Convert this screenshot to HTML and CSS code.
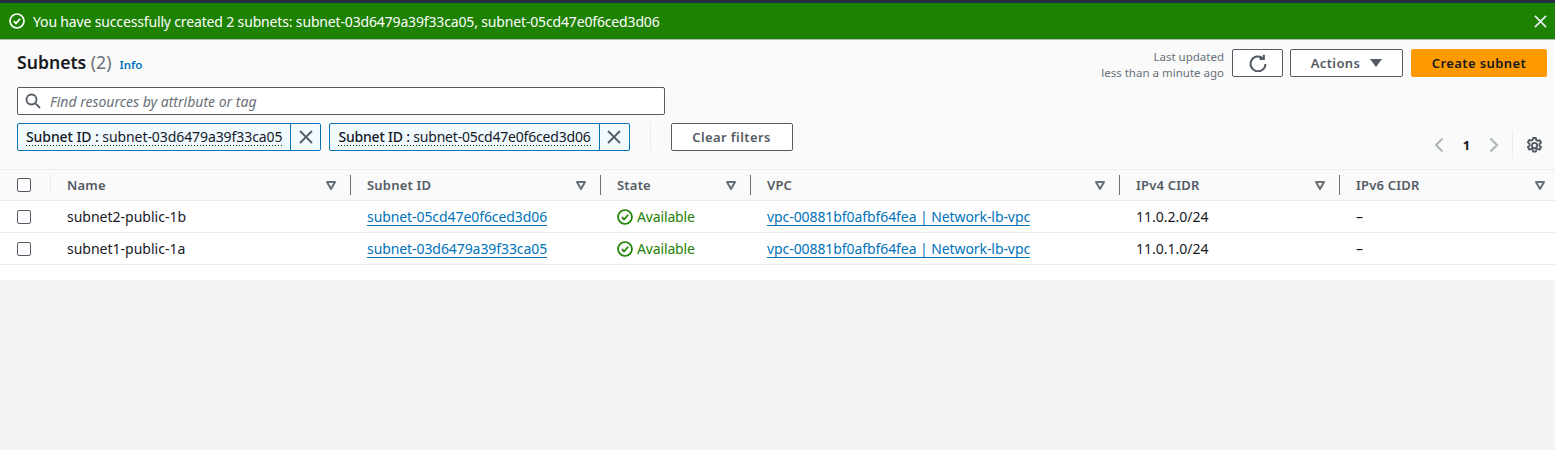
FILE: index.html
```html
<!DOCTYPE html>
<html lang="en">
<head>
    <meta charset="UTF-8">
    <meta name="viewport" content="width=device-width, initial-scale=1.0">
    <title>Subnets</title>
    <link rel="stylesheet" href="styles.css">
</head>
<body>
    <div class="flash">
        <svg class="flash-icon" viewBox="0 0 16 16"><circle cx="8" cy="8" r="7"/><path d="M4.8 8.2l2.2 2.2 4.2-4.6"/></svg>
        <span class="flash-text">You have successfully created 2 subnets: subnet-03d6479a39f33ca05, subnet-05cd47e0f6ced3d06</span>
        <svg class="flash-close" viewBox="0 0 14 14"><path d="M1 1l12 12M13 1L1 13"/></svg>
    </div>

    <div class="panel">
        <div class="panel-top">
            <div class="panel-left">
                <div class="title-row">
                    <h1>Subnets <span class="count">(2)</span></h1>
                    <a class="info">Info</a>
                </div>
                <div class="search">
                    <svg viewBox="0 0 16 16"><circle cx="6.5" cy="6.5" r="5"/><path d="M10.2 10.2l4.8 4.8"/></svg>
                    <span>Find resources by attribute or tag</span>
                </div>
            </div>
            <div class="actions">
                <div class="updated">Last updated<br>less than a minute ago</div>
                <button class="btn btn-refresh">
                    <svg viewBox="0 0 16 16"><path d="M14.6 8.8a6.6 6.6 0 1 1-2.2-4.9"/><path d="M13.2 0.6v3.8H9.4"/></svg>
                </button>
                <button class="btn btn-actions">Actions <i class="caret"></i></button>
                <button class="btn btn-primary">Create subnet</button>
            </div>
        </div>

        <div class="filter-row">
            <div class="token">
                <span class="token-label"><b>Subnet ID :</b> subnet-03d6479a39f33ca05</span>
                <span class="token-x"><svg viewBox="0 0 14 14"><path d="M1 1l12 12M13 1L1 13"/></svg></span>
            </div>
            <div class="token">
                <span class="token-label tight"><b>Subnet ID :</b> subnet-05cd47e0f6ced3d06</span>
                <span class="token-x"><svg viewBox="0 0 14 14"><path d="M1 1l12 12M13 1L1 13"/></svg></span>
            </div>
            <div class="filter-sep"></div>
            <button class="btn btn-clear">Clear filters</button>
            <div class="pager">
                <svg class="chev" viewBox="0 0 10 16"><path d="M8.5 1.5L2 8l6.5 6.5"/></svg>
                <span class="page-num">1</span>
                <svg class="chev" viewBox="0 0 10 16"><path d="M1.5 1.5L8 8l-6.5 6.5"/></svg>
                <div class="pager-sep"></div>
                <svg class="gear" viewBox="0 0 16 16">
                    <path d="M6.7 1h2.6l.4 2 1.3.7 1.9-.7 1.3 2.3-1.5 1.3v1.6l1.5 1.3-1.3 2.3-1.9-.7-1.3.7-.4 2H6.7l-.4-2-1.3-.7-1.9.7-1.3-2.3 1.5-1.3V6.3L1.8 5l1.3-2.3 1.9.7 1.3-.7z"/>
                    <circle cx="8" cy="8" r="2.5"/>
                </svg>
            </div>
        </div>

        <div class="table-wrap">
            <table class="grid">
                <colgroup>
                    <col class="c-check"><col class="c-name"><col class="c-id"><col class="c-state"><col class="c-vpc"><col class="c-cidr"><col>
                </colgroup>
                <thead>
                    <tr>
                        <th><div class="th-check"><span class="box"></span></div></th>
                        <th><div class="th-in">Name <svg class="sort" viewBox="0 0 10 9"><path d="M1 1h8L5 8z"/></svg></div></th>
                        <th><div class="th-in">Subnet ID <svg class="sort" viewBox="0 0 10 9"><path d="M1 1h8L5 8z"/></svg></div></th>
                        <th><div class="th-in">State <svg class="sort" viewBox="0 0 10 9"><path d="M1 1h8L5 8z"/></svg></div></th>
                        <th><div class="th-in">VPC <svg class="sort" viewBox="0 0 10 9"><path d="M1 1h8L5 8z"/></svg></div></th>
                        <th><div class="th-in">IPv4 CIDR <svg class="sort" viewBox="0 0 10 9"><path d="M1 1h8L5 8z"/></svg></div></th>
                        <th class="last"><div class="th-in">IPv6 CIDR <svg class="sort" viewBox="0 0 10 9"><path d="M1 1h8L5 8z"/></svg></div></th>
                    </tr>
                </thead>
                <tbody>
                    <tr>
                        <td class="check"><span class="box"></span></td>
                        <td>subnet2-public-1b</td>
                        <td><a>subnet-05cd47e0f6ced3d06</a></td>
                        <td><span class="state"><svg viewBox="0 0 16 16"><circle cx="8" cy="8" r="7"/><path d="M4.8 8.2l2.2 2.2 4.2-4.6"/></svg>Available</span></td>
                        <td><a>vpc-00881bf0afbf64fea | Network-lb-vpc</a></td>
                        <td>11.0.2.0/24</td>
                        <td>–</td>
                    </tr>
                    <tr>
                        <td class="check"><span class="box"></span></td>
                        <td>subnet1-public-1a</td>
                        <td><a>subnet-03d6479a39f33ca05</a></td>
                        <td><span class="state"><svg viewBox="0 0 16 16"><circle cx="8" cy="8" r="7"/><path d="M4.8 8.2l2.2 2.2 4.2-4.6"/></svg>Available</span></td>
                        <td><a>vpc-00881bf0afbf64fea | Network-lb-vpc</a></td>
                        <td>11.0.1.0/24</td>
                        <td>–</td>
                    </tr>
                </tbody>
            </table>
        </div>
    </div>
</body>
</html>
```

FILE: styles.css
```css
body {
    font-family: "Noto Sans", Arial, sans-serif;
    font-size: 14px;
    margin: 0;
    padding: 0;
    background-color: #f2f3f3;
    color: #16191f;
    overflow: hidden;
}

svg {
    display: block;
    fill: none;
}

/* green banner */
.flash {
    display: flex;
    align-items: center;
    height: 36px;
    padding: 0 9px;
    background-color: #1d8102;
    border-top: 3px solid #232f3e;
    border-bottom: 1px solid #aab7b8;
    color: #fff;
}

.flash-icon {
    width: 16px;
    height: 16px;
    margin-right: 8px;
    stroke: #fff;
    stroke-width: 1.7;
}

.flash-text {
    flex: 1;
    letter-spacing: -0.155px;
}

.flash-close {
    width: 13px;
    height: 13px;
    margin-right: -1px;
    stroke: #eaeded;
    stroke-width: 1.8;
}

.panel {
    background-color: #fafafa;
}

.panel-top {
    display: flex;
    justify-content: space-between;
    padding: 9px 8px 0 17px;
}

.panel-left {
    width: 648px;
}

.title-row {
    display: flex;
    align-items: baseline;
    height: 38px;
    padding-top: 1px;
    box-sizing: border-box;
}

h1 {
    margin: 0;
    font-size: 17.6px;
    font-weight: 600;
    line-height: 24px;
}

.count {
    font-weight: 400;
    color: #687078;
}

.info {
    margin-left: 8px;
    font-size: 11.5px;
    font-weight: 600;
    color: #0073bb;
}

.search {
    display: flex;
    align-items: center;
    height: 28px;
    box-sizing: border-box;
    padding-left: 7px;
    background-color: #fff;
    border: 1px solid #545b64;
    border-radius: 2px;
    font-style: italic;
    color: #687078;
}

.search svg {
    width: 16px;
    height: 16px;
    margin-right: 9px;
    stroke: #545b64;
    stroke-width: 1.8;
}

.actions {
    display: flex;
    align-items: flex-start;
    gap: 10px;
}

.updated {
    margin-right: -2px;
    font-size: 11.5px;
    line-height: 16px;
    text-align: right;
    color: #687078;
}

.btn {
    height: 28px;
    padding: 0;
    background-color: #fff;
    border: 1px solid #545b64;
    border-radius: 2px;
    font-family: inherit;
    font-size: 13px;
    font-weight: 600;
    letter-spacing: 0.4px;
    color: #545b64;
    cursor: pointer;
}

.btn-refresh {
    display: flex;
    align-items: center;
    justify-content: center;
    width: 51px;
}

.btn-refresh svg {
    width: 18px;
    height: 18px;
    stroke: #545b64;
    stroke-width: 1.8;
}

.btn-actions {
    display: flex;
    align-items: center;
    justify-content: center;
    gap: 10px;
    width: 113px;
    margin-left: -3px;
}

.caret {
    width: 0;
    height: 0;
    border-left: 6px solid transparent;
    border-right: 6px solid transparent;
    border-top: 8px solid #545b64;
}

.btn-primary {
    width: 136px;
    margin-left: -2px;
    background-color: #ff9900;
    border-color: #ff9900;
    color: #16191f;
}

/* filters */
.filter-row {
    display: flex;
    align-items: center;
    gap: 8px;
    position: relative;
    padding: 8px 0 0 17px;
    height: 28px;
}

.token {
    display: flex;
    align-items: stretch;
    height: 28px;
    box-sizing: border-box;
    background-color: #f1faff;
    border: 1px solid #0073bb;
    border-radius: 2px;
}

.token-label {
    padding: 0 8px;
    line-height: 25px;
    letter-spacing: -0.08px;
    white-space: nowrap;
    background-image: linear-gradient(to right, #16191f 50%, transparent 50%);
    background-size: 3px 1px;
    background-repeat: repeat-x;
    background-position: 8px 21px;
    background-clip: content-box;
}

.token-label.tight {
    letter-spacing: -0.2px;
}

.token-label b {
    font-weight: 500;
}

.token-x {
    display: flex;
    align-items: center;
    justify-content: center;
    width: 29px;
    border-left: 1px solid #0073bb;
}

.token-x svg {
    width: 14px;
    height: 14px;
    stroke: #545b64;
    stroke-width: 1.8;
}

.filter-sep {
    width: 1px;
    height: 28px;
    margin: 0 12px;
    background-color: #eaeded;
}

.btn-clear {
    width: 122px;
}

.pager {
    position: absolute;
    right: 0;
    top: 16px;
    display: flex;
    align-items: center;
    height: 28px;
}

.chev {
    width: 10px;
    height: 16px;
    stroke: #aab7b8;
    stroke-width: 2;
}

.page-num {
    width: 45px;
    text-align: center;
    font-size: 13px;
    font-weight: 700;
}

.pager-sep {
    width: 1px;
    height: 28px;
    margin: 0 13px;
    background-color: #eaeded;
}

.gear {
    width: 17px;
    height: 17px;
    margin-right: 12px;
    stroke: #545b64;
    stroke-width: 1.8;
    stroke-linejoin: round;
}

/* table */
.table-wrap {
    margin-top: 18px;
    padding-bottom: 15px;
    background-color: #fff;
}

.grid {
    width: 100%;
    table-layout: fixed;
    border-collapse: collapse;
}

.c-check { width: 51px; }
.c-name { width: 300px; }
.c-id { width: 250px; }
.c-state { width: 150px; }
.c-vpc { width: 369px; }
.c-cidr { width: 220px; }

th {
    height: 30px;
    padding: 0;
    background-color: #fafafa;
    border-top: 1px solid #eaeded;
    border-bottom: 1px solid #eaeded;
    text-align: left;
    font-size: 13px;
    font-weight: 600;
    letter-spacing: 0.2px;
    color: #545b64;
}

.th-in {
    display: flex;
    align-items: center;
    justify-content: space-between;
    height: 20px;
    padding: 0 14px 0 16px;
    border-right: 1px solid #687078;
}

th.last .th-in {
    border-right: none;
    padding-right: 10px;
}

.th-check {
    display: flex;
    align-items: center;
    height: 20px;
    padding-left: 17px;
    border-right: 1px solid #eaeded;
}

.sort {
    width: 10px;
    height: 9px;
    stroke: #687078;
    stroke-width: 2;
    stroke-linejoin: round;
}

td {
    height: 31px;
    padding: 0 0 0 16px;
    background-color: #fff;
    border-bottom: 1px solid #eaeded;
    white-space: nowrap;
}

td.check {
    padding-left: 17px;
}

.box {
    display: block;
    width: 12px;
    height: 12px;
    background-color: #fff;
    border: 1px solid #545b64;
    border-radius: 2px;
}

td a {
    letter-spacing: -0.08px;
    color: #0073bb;
    text-decoration: underline;
    text-decoration-thickness: 1px;
    text-decoration-skip-ink: none;
    text-underline-offset: 3px;
}

.state {
    display: flex;
    align-items: center;
    gap: 4px;
    letter-spacing: -0.15px;
    color: #1d8102;
}

.state svg {
    width: 16px;
    height: 16px;
    stroke: #1d8102;
    stroke-width: 1.7;
}
```
